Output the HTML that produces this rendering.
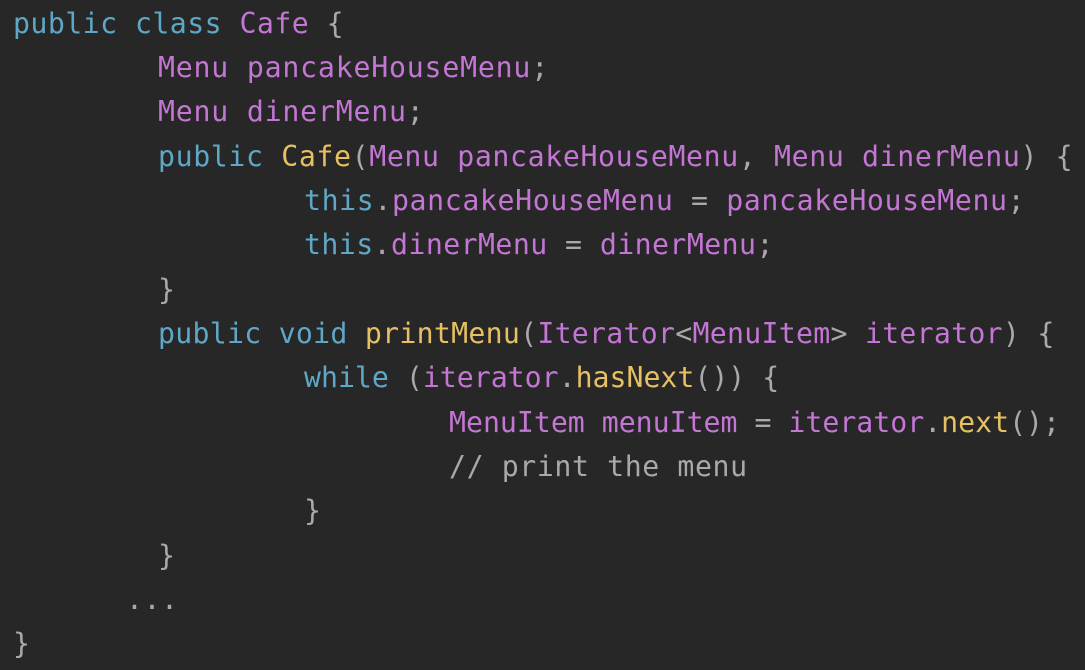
<!DOCTYPE html>
<html><head><meta charset="utf-8"><style>
html,body{margin:0;padding:0;background:#272727;width:1085px;height:670px;overflow:hidden}
.l{position:absolute;white-space:pre;font-family:"DejaVu Sans Mono","Liberation Mono",monospace;font-size:28.2px;line-height:44px;color:#a9a9a9}
.k{color:#5fa7c6}.p{color:#c376d3}.y{color:#e6c062}.g{color:#a9a9a9}
</style></head><body>
<div class="l" style="left:13px;top:2px;letter-spacing:0.45px"><span class="k">public class</span> <span class="p">Cafe</span> {</div>
<div class="l" style="left:158px;top:46px;letter-spacing:0.8px"><span class="p">Menu pancakeHouseMenu</span>;</div>
<div class="l" style="left:158px;top:90px;letter-spacing:0.8px"><span class="p">Menu dinerMenu</span>;</div>
<div class="l" style="left:158px;top:135px;letter-spacing:0.63px"><span class="k">public</span> <span class="y">Cafe</span>(<span class="p">Menu pancakeHouseMenu</span>, <span class="p">Menu dinerMenu</span>) {</div>
<div class="l" style="left:304px;top:179px;letter-spacing:0.62px"><span class="k">this</span>.<span class="p">pancakeHouseMenu</span> = <span class="p">pancakeHouseMenu</span>;</div>
<div class="l" style="left:304px;top:223px;letter-spacing:0.43px"><span class="k">this</span>.<span class="p">dinerMenu</span> = <span class="p">dinerMenu</span>;</div>
<div class="l" style="left:158px;top:268px">}</div>
<div class="l" style="left:158px;top:312px;letter-spacing:0.27px"><span class="k">public void</span> <span class="y">printMenu</span>(<span class="p">Iterator</span>&lt;<span class="p">MenuItem</span>&gt; <span class="p">iterator</span>) {</div>
<div class="l" style="left:304px;top:356px"><span class="k">while</span> (<span class="p">iterator</span>.<span class="y">hasNext</span>()) {</div>
<div class="l" style="left:449px;top:401px"><span class="p">MenuItem menuItem</span> = <span class="p">iterator</span>.<span class="y">next</span>();</div>
<div class="l" style="left:449px;top:445px;letter-spacing:0.6px">// print the menu</div>
<div class="l" style="left:304px;top:489px">}</div>
<div class="l" style="left:158px;top:534px">}</div>
<div class="l" style="left:126px;top:578px;letter-spacing:0.5px">...</div>
<div class="l" style="left:13px;top:622px">}</div>
</body></html>
